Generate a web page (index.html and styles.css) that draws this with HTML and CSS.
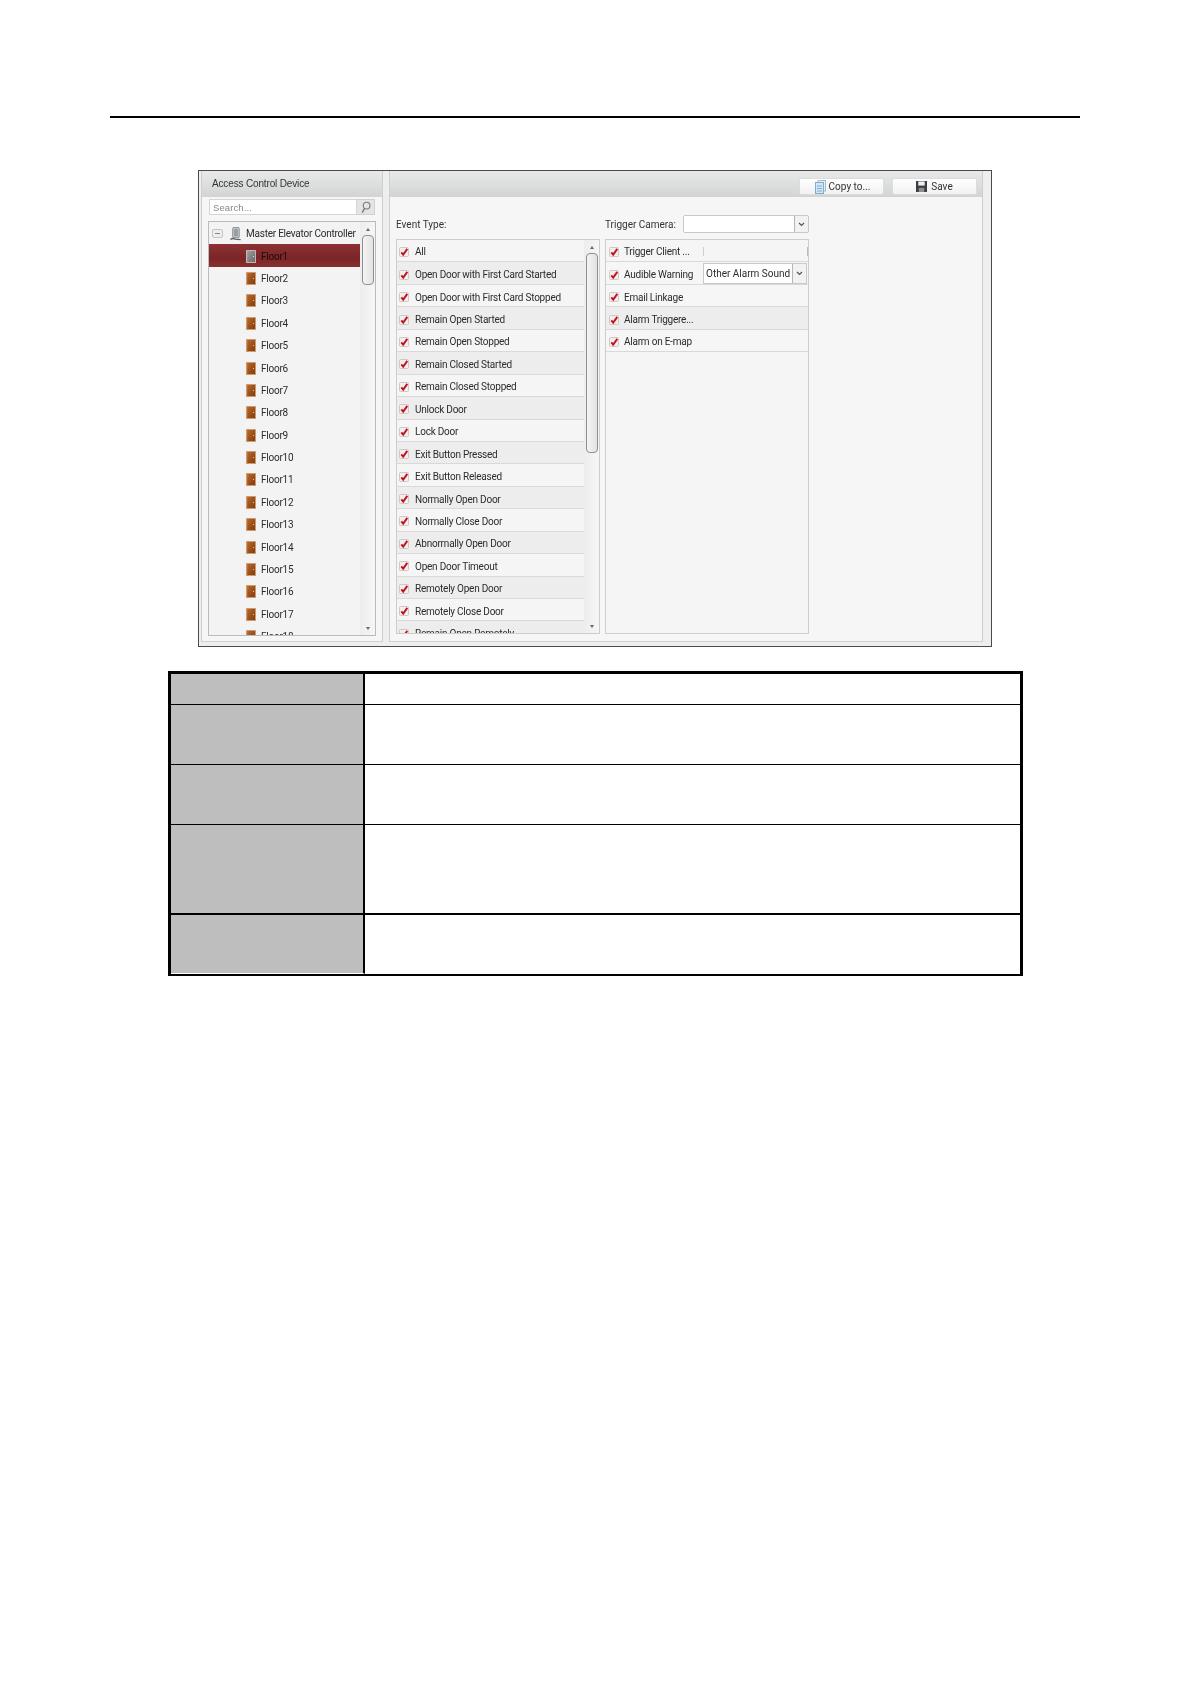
FILE: index.html
```html
<!DOCTYPE html>
<html lang="en">
<head>
<meta charset="utf-8">
<title>Access Control Device</title>
<link rel="stylesheet" href="styles.css">
</head>
<body>
<svg class="defs" width="0" height="0" aria-hidden="true">
  <defs>
    <linearGradient id="wood" x1="0" y1="0" x2="1" y2="1"><stop offset="0" stop-color="#b8692d"/><stop offset="1" stop-color="#7f3d10"/></linearGradient>
    <linearGradient id="woodgrey" x1="0" y1="0" x2="1" y2="1"><stop offset="0" stop-color="#a09c9c"/><stop offset="1" stop-color="#6d6868"/></linearGradient>
    <symbol id="door" viewBox="0 0 10 13"><rect width="10" height="13" rx=".5" fill="#cf9a6c"/><rect x="1.200" y="1" width="7.800" height="11" fill="url(#wood)"/><rect x="7" y="6" width="1" height="1" fill="#e8c48f"/></symbol>
    <symbol id="doorgrey" viewBox="0 0 10 13"><rect width="10" height="13" rx=".5" fill="#bdb6b6"/><rect x="1.200" y="1" width="7.800" height="11" fill="url(#woodgrey)"/><rect x="7" y="6" width="1" height="1" fill="#ddd"/></symbol>
    <symbol id="check" viewBox="0 0 10 10"><rect x=".5" y=".5" width="9" height="9" rx="1" fill="#f3eeee" stroke="#d3c6c6"/><path d="M2.300 5.300 4.200 7.600 8.300 1.900" fill="none" stroke="#c0141c" stroke-width="1.900"/></symbol>
    <symbol id="chev" viewBox="0 0 7 5"><path d="M1 1 3.500 3.500 6 1" fill="none" stroke="#555" stroke-width="1.200"/></symbol>
  </defs>
</svg>

<div class="rule"></div>

<div class="shot">
  <section class="panel left">
    <header class="panel-head"><span class="title">Access Control Device</span></header>
    <div class="search">
      <span class="search-input">Search...</span>
      <span class="search-btn"><svg width="10" height="13" viewBox="0 0 10 13"><circle cx="5.600" cy="4.600" r="3.400" fill="none" stroke="#777" stroke-width="1.100"/><path d="M3.400 7.600 1.200 11.600" stroke="#777" stroke-width="1.400"/></svg></span>
    </div>
    <div class="tree">
      <div class="tree-rows">
        <div class="tree-root">
          <span class="minus"></span>
          <svg class="device" width="11" height="14" viewBox="0 0 11 15"><rect x="2.500" y="0.500" width="7" height="11" rx="1" fill="#c3c9cc" stroke="#858e93"/><rect x="4" y="2" width="4" height="8" fill="#949da2"/><path d="M0 13.500 Q2.500 11.500 5 13 L11 13.500" fill="none" stroke="#5d6468" stroke-width="1.400"/></svg>
          <span>Master Elevator Controller</span>
        </div>
        <div class="floor selected"><svg class="door"><use href="#doorgrey"/></svg><span>Floor1</span></div>
        <div class="floor"><svg class="door"><use href="#door"/></svg><span>Floor2</span></div>
        <div class="floor"><svg class="door"><use href="#door"/></svg><span>Floor3</span></div>
        <div class="floor"><svg class="door"><use href="#door"/></svg><span>Floor4</span></div>
        <div class="floor"><svg class="door"><use href="#door"/></svg><span>Floor5</span></div>
        <div class="floor"><svg class="door"><use href="#door"/></svg><span>Floor6</span></div>
        <div class="floor"><svg class="door"><use href="#door"/></svg><span>Floor7</span></div>
        <div class="floor"><svg class="door"><use href="#door"/></svg><span>Floor8</span></div>
        <div class="floor"><svg class="door"><use href="#door"/></svg><span>Floor9</span></div>
        <div class="floor"><svg class="door"><use href="#door"/></svg><span>Floor10</span></div>
        <div class="floor"><svg class="door"><use href="#door"/></svg><span>Floor11</span></div>
        <div class="floor"><svg class="door"><use href="#door"/></svg><span>Floor12</span></div>
        <div class="floor"><svg class="door"><use href="#door"/></svg><span>Floor13</span></div>
        <div class="floor"><svg class="door"><use href="#door"/></svg><span>Floor14</span></div>
        <div class="floor"><svg class="door"><use href="#door"/></svg><span>Floor15</span></div>
        <div class="floor"><svg class="door"><use href="#door"/></svg><span>Floor16</span></div>
        <div class="floor"><svg class="door"><use href="#door"/></svg><span>Floor17</span></div>
        <div class="floor"><svg class="door"><use href="#door"/></svg><span>Floor18</span></div>
      </div>
      <div class="scrollbar"><i class="arrow up"></i><b class="thumb tree-thumb"></b><i class="arrow down"></i></div>
    </div>
  </section>

  <section class="panel right">
    <header class="panel-head actions">
      <button class="btn copy" type="button"><svg width="11" height="14" viewBox="0 0 11 14"><rect x="3" y="0.500" width="7.500" height="10.500" fill="#e6f1f9" stroke="#9cc0da"/><rect x="0.500" y="2.500" width="8" height="11" fill="#d5e7f4" stroke="#7fadcd"/><path d="M2 6h5M2 8.500h5M2 11h5" stroke="#7fadcd"/></svg><span>Copy to...</span></button>
      <button class="btn" type="button"><svg width="11" height="11" viewBox="0 0 12 12"><rect width="12" height="12" fill="#3b3f42"/><rect x="2.500" y="0.500" width="7" height="4.500" fill="#eef0f1"/><rect x="3" y="7.500" width="6" height="4.500" fill="#8b9093"/></svg><span>Save</span></button>
    </header>
    <div class="columns">
      <div class="column">
        <div class="label-row"><label class="lbl">Event Type:</label></div>
        <div class="listbox">
          <div class="rows">
            <div class="row"><svg class="cb"><use href="#check"/></svg><span>All</span></div>
            <div class="row"><svg class="cb"><use href="#check"/></svg><span>Open Door with First Card Started</span></div>
            <div class="row"><svg class="cb"><use href="#check"/></svg><span>Open Door with First Card Stopped</span></div>
            <div class="row"><svg class="cb"><use href="#check"/></svg><span>Remain Open Started</span></div>
            <div class="row"><svg class="cb"><use href="#check"/></svg><span>Remain Open Stopped</span></div>
            <div class="row"><svg class="cb"><use href="#check"/></svg><span>Remain Closed Started</span></div>
            <div class="row"><svg class="cb"><use href="#check"/></svg><span>Remain Closed Stopped</span></div>
            <div class="row"><svg class="cb"><use href="#check"/></svg><span>Unlock Door</span></div>
            <div class="row"><svg class="cb"><use href="#check"/></svg><span>Lock Door</span></div>
            <div class="row"><svg class="cb"><use href="#check"/></svg><span>Exit Button Pressed</span></div>
            <div class="row"><svg class="cb"><use href="#check"/></svg><span>Exit Button Released</span></div>
            <div class="row"><svg class="cb"><use href="#check"/></svg><span>Normally Open Door</span></div>
            <div class="row"><svg class="cb"><use href="#check"/></svg><span>Normally Close Door</span></div>
            <div class="row"><svg class="cb"><use href="#check"/></svg><span>Abnormally Open Door</span></div>
            <div class="row"><svg class="cb"><use href="#check"/></svg><span>Open Door Timeout</span></div>
            <div class="row"><svg class="cb"><use href="#check"/></svg><span>Remotely Open Door</span></div>
            <div class="row"><svg class="cb"><use href="#check"/></svg><span>Remotely Close Door</span></div>
            <div class="row"><svg class="cb"><use href="#check"/></svg><span>Remain Open Remotely</span></div>
          </div>
          <div class="scrollbar list-bar"><i class="arrow up"></i><b class="thumb list-thumb"></b><i class="arrow down"></i></div>
        </div>
      </div>
      <div class="column">
        <div class="label-row"><label class="lbl cam-lbl">Trigger Camera:</label><span class="combo cam"><span class="combo-val"></span><span class="combo-btn"><svg class="chev"><use href="#chev"/></svg></span></span></div>
        <div class="listbox">
          <div class="rows">
            <div class="row"><svg class="cb"><use href="#check"/></svg><span class="link-name">Trigger Client ...</span><span class="tick"></span><span class="tick end"></span></div>
            <div class="row plain"><svg class="cb"><use href="#check"/></svg><span class="link-name">Audible Warning</span><span class="combo sound"><span class="combo-val">Other Alarm Sound</span><span class="combo-btn"><svg class="chev"><use href="#chev"/></svg></span></span></div>
            <div class="row plain"><svg class="cb"><use href="#check"/></svg><span>Email Linkage</span></div>
            <div class="row"><svg class="cb"><use href="#check"/></svg><span>Alarm Triggere...</span></div>
            <div class="row plain"><svg class="cb"><use href="#check"/></svg><span>Alarm on E-map</span></div>
          </div>
        </div>
      </div>
    </div>
  </section>
</div>

<table class="doc-table">
  <tr class="r1"><td class="key"></td><td class="val"></td></tr>
  <tr class="r2"><td class="key"></td><td class="val"></td></tr>
  <tr class="r3"><td class="key"></td><td class="val"></td></tr>
  <tr class="r4"><td class="key"></td><td class="val"></td></tr>
  <tr class="r5"><td class="key"></td><td class="val"></td></tr>
</table>
</body>
</html>
```
FILE: styles.css
```css
* { box-sizing: border-box; }
html, body { margin: 0; padding: 0; background: #fff; }
body { height: 1684px; overflow: hidden; font-family: "Liberation Sans", Arial, sans-serif; }
.defs { position: absolute; }

.rule { height: 2px; width: 970px; margin: 116px 0 0 110px; background: #000; }

.shot {
  display: flex; gap: 6px;
  width: 794px; height: 477px;
  margin: 52px 0 0 198px;
  padding: 0 8px 4px 2px;
  background: #eeeeee;
  border: 1px solid #4a4a4a;
  color: #2c2c2c;
  font-family: Roboto, "Liberation Sans", sans-serif;
  font-size: 10px;
  letter-spacing: -.23px;
  filter: blur(.3px);
}
.panel { display: flex; flex-direction: column; background: #f6f6f6; border: 1px solid #cfcfcf; border-top: 0; }
.left { width: 182px; }
.right { flex: 1; }
.panel-head {
  flex: none; height: 26px;
  background: linear-gradient(#e8e9e9, #d2d4d4);
  display: flex; align-items: center;
}
.title { margin: 0 0 1px 10px; font-family: "Liberation Sans", Arial, sans-serif; font-size: 10px; letter-spacing: -.15px; color: #333; }

.search { display: flex; height: 16px; margin: 2px 7px 0 7px; }
.search-input { width: 148px; background: #fff; border: 1px solid #d5d5d5; color: #888; font-family: "Liberation Sans", Arial, sans-serif; font-size: 9.5px; line-height: 15px; padding-left: 3px; letter-spacing: .1px; }
.search-btn { width: 18px; display: flex; align-items: center; justify-content: center; background: #e4e4e4; border: 1px solid #d0d0d0; border-left: 0; }

.tree { display: flex; height: 415px; margin: 6px 6px 0 6px; background: #f3f3f3; border: 1px solid #b9bcbc; }
.tree-rows { flex: 1; overflow: hidden; }
.tree-root { height: 22.4px; display: flex; align-items: center; padding: 1px 0 0 3px; white-space: nowrap; }
.minus { width: 11px; height: 9px; flex: none; margin-right: 7px; background: linear-gradient(90deg, #888, #888) center/5px 1px no-repeat, #eee; border: 1px solid #c4c4c4; border-radius: 2px; }
.device { margin-right: 5px; flex: none; }
.floor { height: 22.4px; display: flex; align-items: center; padding: 1px 0 0 37px; }
.door { width: 10px; height: 13px; flex: none; margin-right: 5px; }
.selected { background: linear-gradient(#8e3234, #7a2528 60%, #88302f); color: #200a0a; }

.scrollbar { flex: none; width: 15px; display: flex; flex-direction: column; align-items: center; background: linear-gradient(90deg, #ededed, #f6f6f6); position: relative; }
.arrow { width: 0; height: 0; border-left: 2px solid transparent; border-right: 2px solid transparent; }
.arrow.up { border-bottom: 3px solid #666; margin-top: 6px; }
.arrow.down { border-top: 3px solid #666; margin-top: auto; margin-bottom: 5px; }
.thumb { display: block; width: 12px; background: linear-gradient(90deg, #f4f4f4, #e2e2e2); border: 1px solid #8f8f8f; border-radius: 4px; }
.tree-thumb { height: 50px; margin-top: 4px; }
.list-thumb { height: 200px; margin-top: 4px; }

.actions { justify-content: flex-end; padding: 5px 5px 0 0; gap: 8px; }
.btn {
  width: 85px; height: 17px; padding: 0;
  display: flex; align-items: center; justify-content: center; gap: 4px;
  background: linear-gradient(#fff, #f1f1f1);
  border: 1px solid #dcdcdc; border-radius: 2px;
  font: 10px Roboto, "Liberation Sans", sans-serif; color: #333;
}
.copy { padding-left: 2px; gap: 3px; }

.columns { display: flex; gap: 5px; padding-left: 6px; }
.column { width: 204px; display: flex; flex-direction: column; }
.label-row { height: 18px; margin: 18px 0 6px; display: flex; align-items: center; }
.lbl { color: #333; letter-spacing: 0; }
.cam-lbl { width: 78px; flex: none; }

.listbox { display: flex; height: 395px; border: 1px solid #cdcdcd; background: #f5f5f5; }
.rows { flex: 1; overflow: hidden; }
.row {
  height: 22.45px; display: flex; align-items: center;
  padding: 2px 0 0 2px;
  border-bottom: 1px solid #d9d9d9;
  white-space: nowrap;
}
.row:nth-child(n+2) { padding-top: 3px; }
.row:nth-child(even) { background: #ededed; }
.row.plain { background: #f6f6f6; }
.cb { width: 10px; height: 10px; flex: none; margin-right: 6px; }
.column + .column .row { padding-left: 3px; }
.column + .column .cb { margin-right: 5px; }

.link-name { width: 79px; flex: none; }
.tick { width: 1px; height: 9px; background: #cfcfcf; }
.tick.end { margin-left: 103px; background: #bbb; }
.combo { display: flex; background: #fff; border: 1px solid #c9c9c9; }
.combo-val { flex: 1; padding-left: 2px; white-space: nowrap; overflow: hidden; letter-spacing: 0; }
.combo-btn { width: 14px; flex: none; display: flex; align-items: center; justify-content: center; background: #f2f2f2; border-left: 1px solid #b5b5b5; }
.chev { width: 7px; height: 5px; }
.cam { width: 126px; height: 18px; border-radius: 2px; }
.sound { width: 104px; height: 21px; flex: none; margin-top: -2px; align-items: stretch; line-height: 20px; }

.doc-table {
  margin: 24px 0 0 168px; width: 855px;
  border-collapse: separate; border-spacing: 0;
  table-layout: fixed;
  border-style: solid; border-color: #000; border-width: 3px 3px 2px 3px;
}
.doc-table td { padding: 0; border-bottom: 1px solid #000; }
.key { width: 194px; background: #bebebe; border-right: 2px solid #000; }
.val { background: #fff; }
.r1 td { height: 31px; }
.r2 td, .r3 td { height: 60px; }
.r4 td { height: 90px; border-bottom-width: 2px; }
.r5 td { height: 59px; border-bottom: 0; }
.r5 .key { border-bottom: 1px solid #fff; }
```
